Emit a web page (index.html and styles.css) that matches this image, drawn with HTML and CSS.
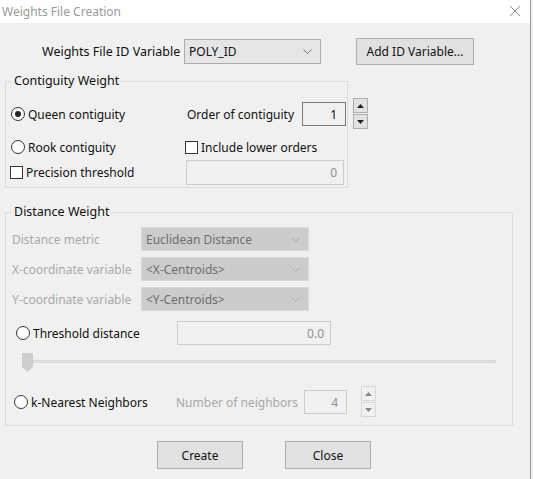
FILE: index.html
```html
<!DOCTYPE html>
<html lang="en">

<head>
  <meta charset="UTF-8">
  <title>Weights File Creation</title>
  <link rel="stylesheet" href="styles.css">
</head>

<body>
  <div class="window">
    <div class="titlebar">
      <span class="title">Weights File Creation</span>
      <svg class="close-x" width="12" height="12" viewBox="0 0 12 12">
        <path d="M1 1 L11 11 M11 1 L1 11" stroke="#888" stroke-width="1" fill="none" />
      </svg>
    </div>

    <div class="content">
      <!-- id variable row -->
      <div class="id-row">
        <span class="label">Weights File ID Variable</span>
        <div class="select id-select">
          <span>POLY_ID</span>
          <svg class="chev" width="9" height="5" viewBox="0 0 9 5"><path d="M0.5 0.5 L4.5 4.5 L8.5 0.5" stroke="#777" fill="none" /></svg>
        </div>
        <div class="button add-btn">Add ID Variable...</div>
      </div>

      <!-- contiguity group -->
      <fieldset class="group contiguity">
        <legend>Contiguity Weight</legend>
        <div class="row row-queen">
          <div class="left-col">
            <span class="radio checked"></span><span>Queen contiguity</span>
          </div>
          <span class="label">Order of contiguity</span>
          <div class="input order-input">1</div>
          <div class="spin">
            <div class="spin-btn"><svg width="7" height="4" viewBox="0 0 7 4"><path d="M0 4 L3.5 0 L7 4Z" fill="#222" /></svg></div>
            <div class="spin-btn"><svg width="7" height="4" viewBox="0 0 7 4"><path d="M0 0 L3.5 4 L7 0Z" fill="#222" /></svg></div>
          </div>
        </div>
        <div class="row row-rook">
          <div class="left-col">
            <span class="radio"></span><span>Rook contiguity</span>
          </div>
          <span class="check"></span><span>Include lower orders</span>
        </div>
        <div class="row row-precision">
          <div class="left-col">
            <span class="check"></span><span>Precision threshold</span>
          </div>
          <div class="input disabled precision-input">0</div>
        </div>
      </fieldset>

      <!-- distance group -->
      <fieldset class="group distance">
        <legend>Distance Weight</legend>
        <div class="row dist-row">
          <span class="dim-label">Distance metric</span>
          <div class="select disabled">
            <span>Euclidean Distance</span>
            <svg class="chev" width="9" height="5" viewBox="0 0 9 5"><path d="M0.5 0.5 L4.5 4.5 L8.5 0.5" stroke="#aaa" fill="none" /></svg>
          </div>
        </div>
        <div class="row dist-row">
          <span class="dim-label">X-coordinate variable</span>
          <div class="select disabled">
            <span>&lt;X-Centroids&gt;</span>
            <svg class="chev" width="9" height="5" viewBox="0 0 9 5"><path d="M0.5 0.5 L4.5 4.5 L8.5 0.5" stroke="#aaa" fill="none" /></svg>
          </div>
        </div>
        <div class="row dist-row">
          <span class="dim-label">Y-coordinate variable</span>
          <div class="select disabled">
            <span>&lt;Y-Centroids&gt;</span>
            <svg class="chev" width="9" height="5" viewBox="0 0 9 5"><path d="M0.5 0.5 L4.5 4.5 L8.5 0.5" stroke="#aaa" fill="none" /></svg>
          </div>
        </div>
        <div class="row row-threshold">
          <div class="thr-col">
            <span class="radio"></span><span>Threshold distance</span>
          </div>
          <div class="input disabled threshold-input">0.0</div>
        </div>
        <div class="row row-slider">
          <svg class="thumb" width="11" height="19" viewBox="0 0 11 19">
            <path d="M0 0 H11 V14 L5.5 19 L0 14Z" fill="#cdcdcd" />
          </svg>
          <div class="track"></div>
        </div>
        <div class="row row-knn">
          <div class="knn-col">
            <span class="radio"></span><span>k-Nearest Neighbors</span>
          </div>
          <span class="dim-label">Number of neighbors</span>
          <div class="input disabled knn-input">4</div>
          <div class="spin disabled">
            <div class="spin-btn"><svg width="7" height="4" viewBox="0 0 7 4"><path d="M0 4 L3.5 0 L7 4Z" fill="#888" /></svg></div>
            <div class="spin-btn"><svg width="7" height="4" viewBox="0 0 7 4"><path d="M0 0 L3.5 4 L7 0Z" fill="#888" /></svg></div>
          </div>
        </div>
      </fieldset>

      <div class="actions">
        <div class="button action-btn">Create</div>
        <div class="button action-btn">Close</div>
      </div>
    </div>
  </div>
</body>

</html>
```

FILE: styles.css
```css
body {
  margin: 0;
  background: #f0f0f0;
  font-family: 'Noto Sans', 'Noto Sans CJK SC', sans-serif;
  font-size: 12px;
  color: #111;
}

span {
  white-space: nowrap;
  flex-shrink: 0;
}

.window {
  width: 531px;
  height: 479px;
  box-sizing: border-box;
  border-right: 1px solid #9a9a9a;
  background: #f0f0f0;
}

.titlebar {
  height: 23px;
  background: #fff;
  display: flex;
  align-items: center;
  justify-content: space-between;
  padding: 0 9px 0 2px;
}

.title {
  color: #9a9a9a;
  font-size: 12px;
}

.close-x {
  margin-top: -1px;
}

/* top row */
.id-row {
  display: flex;
  align-items: center;
  margin-top: 15px;
  padding-left: 42px;
  height: 26px;
}

.id-row .label {
  width: 142px;
  font-size: 12.5px;
}

.select {
  display: flex;
  align-items: center;
  justify-content: space-between;
  box-sizing: border-box;
  height: 24px;
  padding: 0 8px 0 4px;
  border: 1px solid #adadad;
  background: #e5e5e5;
  flex-shrink: 0;
}

.id-select {
  width: 137px;
  height: 25px;
}

.select.disabled {
  width: 168px;
  background: #cccccc;
  border-color: #d9d9d9;
  color: #6d6d6d;
}

.button {
  display: flex;
  align-items: center;
  justify-content: center;
  box-sizing: border-box;
  border: 1px solid #adadad;
  background: #e1e1e1;
  flex-shrink: 0;
}

.add-btn {
  margin-left: 35px;
  width: 118px;
  height: 27px;
}

/* group boxes */
.group {
  margin: 9px 0 0 5px;
  padding: 0 0 2px 5px;
  border: 1px solid #dcdcdc;
  box-sizing: border-box;
  min-width: 0;
}

.group legend {
  padding: 0 2px;
  margin-left: 1px;
  line-height: 16px;
  font-size: 12.5px;
}

.contiguity {
  width: 343px;
}

.distance {
  width: 508px;
  margin-top: 16px;
  padding-bottom: 7px;
}

.row {
  display: flex;
  align-items: center;
}

.left-col {
  display: flex;
  align-items: center;
  width: 176px;
  flex-shrink: 0;
}

.radio {
  display: inline-block;
  width: 12px;
  height: 12px;
  border: 1px solid #333;
  border-radius: 50%;
  background: #fff;
  margin-right: 3px;
  position: relative;
}

.radio.checked::after {
  content: "";
  position: absolute;
  left: 3px;
  top: 3px;
  width: 6px;
  height: 6px;
  border-radius: 50%;
  background: #222;
}

.check {
  display: inline-block;
  width: 11px;
  height: 11px;
  border: 1px solid #333;
  background: #fff;
  margin-right: 3px;
}

.input {
  display: flex;
  align-items: center;
  justify-content: flex-end;
  box-sizing: border-box;
  padding-right: 6px;
  border: 1px solid #7a7a7a;
  background: #f0f0f0;
  flex-shrink: 0;
}

.input.disabled {
  border-color: #cccccc;
  color: #8a8f99;
}

.row-queen {
  height: 32px;
  margin-top: 9px;
}

.row-queen .label {
  width: 115px;
}

.order-input {
  width: 44px;
  height: 24px;
  padding-right: 8px;
}

.spin {
  display: flex;
  flex-direction: column;
  margin-left: 7px;
  flex-shrink: 0;
}

.spin-btn {
  width: 15px;
  height: 15px;
  box-sizing: border-box;
  border: 1px solid #adadad;
  background: #e1e1e1;
  display: flex;
  align-items: center;
  justify-content: center;
  margin-bottom: 1px;
}

.spin.disabled .spin-btn {
  border-color: #d6d6d6;
  background: #f0f0f0;
}

.row-rook {
  height: 20px;
  margin-top: 7px;
}

.row-rook .left-col {
  width: 174px;
}

.row-precision {
  height: 25px;
  margin-top: 3px;
}

.row-precision .left-col {
  width: 175px;
}

.row-precision .left-col .check {
  margin-left: -1px;
}

.precision-input {
  width: 158px;
  height: 25px;
}

/* distance rows */
.dim-label {
  color: #a8a8a8;
}

.dist-row {
  height: 24px;
  margin-top: 6px;
  padding-left: 1px;
}

.dist-row:first-of-type {
  margin-top: 7px;
}

.dist-row .dim-label {
  width: 129px;
}

.row-threshold {
  height: 24px;
  margin-top: 10px;
  padding-left: 5px;
}

.thr-col {
  display: flex;
  align-items: center;
  width: 161px;
  flex-shrink: 0;
}

.threshold-input {
  width: 154px;
  height: 24px;
}

.row-slider {
  height: 22px;
  margin-top: 6px;
  padding-left: 11px;
  align-items: flex-start;
  padding-top: 2px;
}

.track {
  margin-top: 7px;
  width: 463px;
  height: 3px;
  box-sizing: border-box;
  border: 1px solid #d6d6d6;
  background: #e4e4e4;
}

.row-knn {
  height: 32px;
  margin-top: 11px;
  padding-left: 3px;
}

.knn-col {
  display: flex;
  align-items: center;
  width: 162px;
  flex-shrink: 0;
}

.row-knn .dim-label {
  width: 128px;
}

.knn-input {
  width: 43px;
  height: 24px;
  padding-right: 8px;
}

.row-knn .spin {
  margin-left: 14px;
}

/* bottom buttons */
.actions {
  display: flex;
  gap: 42px;
  margin-top: 15px;
  padding-left: 157px;
}

.action-btn {
  width: 86px;
  height: 28px;
}
```
